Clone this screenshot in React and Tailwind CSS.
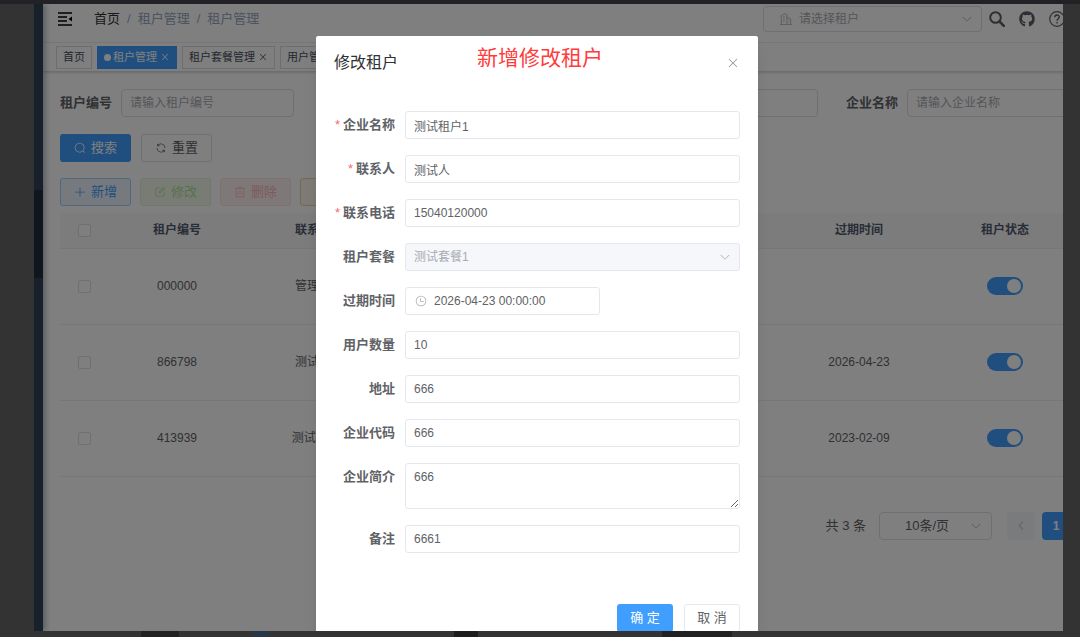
import React, { useState } from 'react';
import { FaGithub } from 'react-icons/fa';

// Icon outlines, drawn on a 1024 grid
const icons = {
    search: 'm795.904 750.72 124.992 124.928a32 32 0 0 1-45.248 45.248L750.656 795.904a416 416 0 1 1 45.248-45.248zM480 832a352 352 0 1 0 0-704 352 352 0 0 0 0 704',
    refresh: 'M771.776 794.88A384 384 0 0 1 128 512h64a320 320 0 0 0 555.712 216.448H654.72a32 32 0 1 1 0-64h149.056a32 32 0 0 1 32 32v148.928a32 32 0 1 1-64 0v-50.56zM276.288 295.616h92.992a32 32 0 0 1 0 64H220.16a32 32 0 0 1-32-32V178.56a32 32 0 0 1 64 0v50.56A384 384 0 0 1 896.128 512h-64a320 320 0 0 0-555.776-216.384z',
    plus: 'M480 480V128a32 32 0 0 1 64 0v352h352a32 32 0 1 1 0 64H544v352a32 32 0 1 1-64 0V544H128a32 32 0 0 1 0-64z',
    edit: 'M832 512a32 32 0 1 1 64 0v352a32 32 0 0 1-32 32H160a32 32 0 0 1-32-32V160a32 32 0 0 1 32-32h352a32 32 0 0 1 0 64H192v640h640zM469.952 554.24l52.8-7.552L847.104 222.4a32 32 0 1 0-45.248-45.248L477.44 501.44l-7.552 52.8zm422.4-422.4a96 96 0 0 1 0 135.808l-331.84 331.84a32 32 0 0 1-18.112 9.088L436.8 623.68a32 32 0 0 1-36.224-36.224l15.104-105.6a32 32 0 0 1 9.024-18.112l331.904-331.84a96 96 0 0 1 135.744 0z',
    trash: 'M160 256H96a32 32 0 0 1 0-64h256V95.936a32 32 0 0 1 32-32h256a32 32 0 0 1 32 32V192h256a32 32 0 1 1 0 64h-64v672a32 32 0 0 1-32 32H192a32 32 0 0 1-32-32zm448-64v-64H416v64zM224 896h576V256H224zm192-128a32 32 0 0 1-32-32V416a32 32 0 0 1 64 0v320a32 32 0 0 1-32 32m192 0a32 32 0 0 1-32-32V416a32 32 0 0 1 64 0v320a32 32 0 0 1-32 32',
    download: 'M160 832h704a32 32 0 1 1 0 64H160a32 32 0 1 1 0-64m384-253.696 236.288-236.352 45.248 45.248L508.8 704 192 387.2l45.248-45.248L480 584.704V128h64z',
    close: 'M764.288 214.592 512 466.88 259.712 214.592a31.936 31.936 0 0 0-45.12 45.12L466.752 512 214.528 764.224a31.936 31.936 0 1 0 45.12 45.184L512 557.184l252.288 252.288a31.936 31.936 0 0 0 45.12-45.12L557.12 512.064l252.288-252.352a31.936 31.936 0 1 0-45.12-45.184z',
    down: 'M831.872 340.864 512 652.672 192.128 340.864a30.592 30.592 0 0 0-42.752 0 29.12 29.12 0 0 0 0 41.6L489.664 714.24a32 32 0 0 0 44.672 0l340.288-331.712a29.12 29.12 0 0 0 0-41.728 30.592 30.592 0 0 0-42.752 0z',
    left: 'M609.408 149.376 277.76 489.6a32 32 0 0 0 0 44.672l331.648 340.352a29.12 29.12 0 0 0 41.728 0 30.592 30.592 0 0 0 0-42.752L339.264 511.936l311.872-319.872a30.592 30.592 0 0 0 0-42.688 29.12 29.12 0 0 0-41.728 0z',
    clock: 'M512 896a384 384 0 1 0 0-768 384 384 0 0 0 0 768m0 64a448 448 0 1 1 0-896 448 448 0 0 1 0 896M480 256a32 32 0 0 1 32 32v256a32 32 0 0 1-64 0V288a32 32 0 0 1 32-32M480 512h256q32 0 32 32t-32 32H480q-32 0-32-32t32-32',
};

const Icon = ({ name, className = 'h-3 w-3' }) => (
    <svg viewBox="0 0 1024 1024" fill="currentColor" className={`shrink-0 ${className}`} aria-hidden="true">
        <path d={icons[name]} />
    </svg>
);

const searchFields = [
    { id: 'q-tenant', label: '租户编号' },
    { id: 'q-contact', label: '联系人' },
    { id: 'q-phone', label: '联系电话' },
    { id: 'q-company', label: '企业名称' },
];

const tags = [
    { name: '首页' },
    { name: '租户管理', active: true, closable: true },
    { name: '租户套餐管理', closable: true },
    { name: '用户管理', closable: true },
];

const tools = [
    { name: '新增', icon: 'plus', color: 'border-[#9fceff] bg-[#ecf5ff] text-[#409eff]' },
    { name: '修改', icon: 'edit', color: 'border-[#e1f3d8] bg-[#f0f9eb] text-[#b3e19d]' },
    { name: '删除', icon: 'trash', color: 'border-[#fde2e2] bg-[#fef0f0] text-[#fab6b6]' },
    { name: '导出', icon: 'download', color: 'border-[#f3d19e] bg-[#fdf6ec] text-[#e6a23c]' },
];

const tenants = [
    { id: '000000', contact: '管理组', expire: '' },
    { id: '866798', contact: '测试人', expire: '2026-04-23' },
    { id: '413939', contact: '测试组1', expire: '2023-02-09' },
];

const formFields = [
    { id: 'companyName', label: '企业名称', value: '测试租户1', required: true },
    { id: 'contact', label: '联系人', value: '测试人', required: true },
    { id: 'phone', label: '联系电话', value: '15040120000', required: true },
    { id: 'package', label: '租户套餐', value: '测试套餐1', type: 'select' },
    { id: 'expire', label: '过期时间', value: '2026-04-23 00:00:00', type: 'date' },
    { id: 'userCount', label: '用户数量', value: '10' },
    { id: 'address', label: '地址', value: '666' },
    { id: 'code', label: '企业代码', value: '666' },
    { id: 'intro', label: '企业简介', value: '666', type: 'textarea' },
    { id: 'remark', label: '备注', value: '6661' },
];

const Navbar = () => (
    <header className="flex h-[39px] items-center border-b border-[#f0f0f0] pb-2 pl-[15px] pr-[18px]">
        <button type="button" aria-label="折叠菜单" className="text-black">
            <svg viewBox="0 0 14 14" className="h-[14px] w-[14px]" fill="none" stroke="currentColor" strokeWidth="1.5">
                <path d="M0 1h14M0 5h9M0 9h9M0 13h14" />
                <path d="M14 4.5v5L10.5 7z" fill="currentColor" stroke="none" />
            </svg>
        </button>
        <nav className="ml-[22px] flex items-center gap-[7px] text-[13px] text-[#97a8be]">
            <a href="#home" className="text-[#303133]">首页</a>
            <span>/</span>
            <span>租户管理</span>
            <span>/</span>
            <span>租户管理</span>
        </nav>
        <div className="ml-auto flex items-center gap-[14px] text-[#5a5e66]">
            <div className="-mr-[7px] flex h-[26px] w-[219px] items-center rounded border border-[#dcdfe6] pl-4 pr-2 text-[#a8abb2]">
                <svg viewBox="0 0 14 14" className="h-3 w-3 shrink-0" fill="none" stroke="currentColor" strokeWidth="0.9" aria-hidden="true">
                    <path d="M0 13.5h14M1.5 13V3L6 .8l2 1V13M8 5l4.500 2v6M3.500 4.500h2M3.500 7h2M3.500 9.500h2M10 8.500h1M10 10.500h1" />
                </svg>
                <select aria-label="选择租户" className="ml-[7px] min-w-0 flex-1 appearance-none text-[12px] outline-none">
                    <option>请选择租户</option>
                </select>
                <Icon name="down" />
            </div>
            <button type="button" aria-label="搜索菜单">
                <svg viewBox="0 0 16 16" className="h-4 w-4" fill="none" stroke="currentColor">
                    <circle cx="6.500" cy="6.500" r="5.300" strokeWidth="2" />
                    <path d="M10.500 10.500 14.800 14.800" strokeWidth="2.600" strokeLinecap="round" />
                </svg>
            </button>
            <a href="#github" aria-label="GitHub"><FaGithub className="h-4 w-4" /></a>
            <a href="#docs" aria-label="帮助">
                <svg viewBox="0 0 16 16" className="h-4 w-4" fill="none" stroke="currentColor" strokeWidth="1.200">
                    <circle cx="8" cy="8" r="7.300" />
                    <path d="M5.800 6.300C5.800 3.300 10.300 3.400 10.300 6.100 10.300 7.700 8 7.900 8 9.800M8 11v1.400" strokeWidth="1.400" />
                </svg>
            </a>
        </div>
    </header>
);

const TagsView = () => (
    <div className="flex h-[29px] items-center gap-[5px] border-b border-[#d8dce5] pl-[13px] shadow-sm">
        {tags.map((tag) => (
            <a
                key={tag.name}
                href="#tag"
                className={`flex h-[23px] items-center border px-[6px] text-[11px] ${tag.active ? 'border-[#409eff] bg-[#409eff] text-white' : 'border-[#d8dce5] text-[#495060]'}`}
            >
                {tag.active && <span className="mr-[2px] h-[7px] w-[7px] rounded-full bg-white" />}
                {tag.name}
                {tag.closable && <Icon name="close" className="ml-[3px] h-[10px] w-[10px]" />}
            </a>
        ))}
    </div>
);

const Switch = ({ label }) => {
    const [on, setOn] = useState(true);
    return (
        <input
            type="checkbox"
            role="switch"
            aria-label={label}
            checked={on}
            onChange={() => setOn(!on)}
            className="block h-[18px] w-9 appearance-none rounded-full bg-[#dcdfe6] p-[2px] before:block before:h-[14px] before:w-[14px] before:rounded-full before:bg-white checked:bg-[#409eff] checked:before:ml-auto"
        />
    );
};

const CheckBox = ({ label }) => (
    <input type="checkbox" aria-label={label} className="block h-[13px] w-[13px] appearance-none rounded-xs border border-[#dcdfe6] bg-white checked:bg-[#409eff]" />
);

const TenantTable = () => (
    <table className="w-full table-fixed text-center text-[12px] text-[#606266]">
        <colgroup>
            <col className="w-[49px]" />
            <col className="w-[136px]" />
            <col className="w-[136px]" />
            <col />
            <col className="w-[136px]" />
            <col className="w-[156px]" />
        </colgroup>
        <thead>
            <tr className="h-[35px] border-b border-[#ebeef5] bg-[#f8f8f9] text-[#515a6e]">
                <th><div className="flex justify-center"><CheckBox label="全选" /></div></th>
                <th>租户编号</th>
                <th>联系人</th>
                <th aria-hidden="true" />
                <th>过期时间</th>
                <th>租户状态</th>
            </tr>
        </thead>
        <tbody>
            {tenants.map((row) => (
                <tr key={row.id} className="h-[76px] border-b border-[#ebeef5]">
                    <td><div className="flex justify-center"><CheckBox label={row.id} /></div></td>
                    <td>{row.id}</td>
                    <td>{row.contact}</td>
                    <td />
                    <td>{row.expire}</td>
                    <td><div className="flex justify-center"><Switch label={`状态 ${row.id}`} /></div></td>
                </tr>
            ))}
        </tbody>
    </table>
);

const Pagination = () => (
    <div className="mt-[35px] flex h-7 items-center justify-end pr-[13px] text-[12px] text-[#606266]">
        <span className="text-[13px]">共 3 条</span>
        <div className="ml-[13px] flex h-7 w-[113px] items-center rounded border border-[#dcdfe6] pr-[9px]">
            <select aria-label="每页条数" className="min-w-0 flex-1 appearance-none pl-[25px] text-[13px] outline-none">
                <option>10条/页</option>
            </select>
            <Icon name="down" className="h-3 w-3 text-[#a8abb2]" />
        </div>
        <button type="button" aria-label="上一页" className="ml-[15px] flex h-7 w-7 items-center justify-center rounded-sm bg-[#f5f7fa] text-[#a8abb2]">
            <Icon name="left" className="h-[11px] w-[11px]" />
        </button>
        <button type="button" className="ml-[7px] h-7 w-7 rounded-sm bg-[#409eff] font-bold text-white">1</button>
    </div>
);

const inputClass = 'block h-7 w-full rounded-[3px] border border-[#e4e7ed] px-2 text-[12px] text-[#606266] outline-none';

const FormControl = ({ field }) => {
    if (field.type === 'select') {
        return (
            <div className="flex h-7 items-center rounded-[3px] border border-[#e4e7ed] bg-[#f5f7fa] px-2 text-[#a8abb2]">
                <select id={field.id} disabled className="min-w-0 flex-1 appearance-none text-[12px]">
                    <option>{field.value}</option>
                </select>
                <Icon name="down" />
            </div>
        );
    }
    if (field.type === 'date') {
        return (
            <div className="flex h-7 w-[195px] items-center gap-[7px] rounded-[3px] border border-[#e4e7ed] px-[9px] text-[#a8abb2]">
                <Icon name="clock" />
                <input id={field.id} defaultValue={field.value} className="min-w-0 flex-1 text-[12px] text-[#606266] outline-none" />
            </div>
        );
    }
    if (field.type === 'textarea') {
        return (
            <textarea
                id={field.id}
                defaultValue={field.value}
                className="block h-[46px] w-full resize-y rounded-[3px] border border-[#e4e7ed] px-2 py-1 text-[12px] text-[#606266] outline-none"
            />
        );
    }
    return <input id={field.id} defaultValue={field.value} className={inputClass} />;
};

const TenantDialog = () => (
    <section role="dialog" aria-label="修改租户" className="mt-8 w-[442px] rounded-xs bg-white px-[18px] pb-[18px] shadow-lg">
        <div className="flex h-[75px] items-start pt-[15px]">
            <h2 className="text-[16px] leading-6 text-[#303133]">修改租户</h2>
            <p className="-mt-2 ml-[79px] text-[21px] leading-[30px] text-[#ff3b3b]">新增修改租户</p>
            <button type="button" aria-label="关闭" className="ml-auto mt-[5px] text-[#909399]">
                <Icon name="close" className="h-[14px] w-[14px]" />
            </button>
        </div>
        <form className="flex flex-col gap-4">
            {formFields.map((field) => (
                <div key={field.id} className="flex">
                    <label htmlFor={field.id} className="w-[71px] shrink-0 whitespace-nowrap pr-[10px] text-right text-[13px] font-bold leading-7 text-[#606266]">
                        {field.required && <span className="mr-[3px] font-normal text-[#f56c6c]">*</span>}
                        {field.label}
                    </label>
                    <div className="min-w-0 flex-1">
                        <FormControl field={field} />
                    </div>
                </div>
            ))}
        </form>
        <div className="mt-[51px] flex justify-end gap-[11px] text-[13px]">
            <button type="button" className="h-7 w-14 rounded-[3px] bg-[#409eff] text-white">确 定</button>
            <button type="button" className="h-7 w-14 rounded-[3px] border border-[#e4e7ed] text-[#606266]">取 消</button>
        </div>
    </section>
);

export default function App() {
    return (
        <div className="flex h-screen flex-col overflow-hidden bg-[#333] font-['Liberation_Sans','Noto_Sans_CJK_SC',sans-serif]">
            <div className="h-1 shrink-0 bg-[#222226]" />
            <div className="relative ml-[34px] mr-[17px] flex min-h-0 flex-1 overflow-hidden bg-white">
                <aside className="z-0 w-[9px] shrink-0 bg-[#304156] pt-[186px] shadow-[2px_0_6px_rgba(0,21,41,0.35)]">
                    <div className="h-[88px] bg-[#1f2d3d]" />
                </aside>

                <main className="min-w-[1040px] flex-1">
                    <Navbar />
                    <TagsView />
                    <div className="pl-[17px] pt-[17px]">
                        <form className="flex gap-7">
                            {searchFields.map((field) => (
                                <div key={field.id} className="flex shrink-0 items-center">
                                    <label htmlFor={field.id} className="w-[61px] whitespace-nowrap text-[13px] font-bold text-[#606266]">{field.label}</label>
                                    <input
                                        id={field.id}
                                        placeholder={`请输入${field.label}`}
                                        className="h-7 w-[173px] rounded border border-[#dcdfe6] px-2 text-[12px] outline-none placeholder:text-[#a8abb2]"
                                    />
                                </div>
                            ))}
                        </form>
                        <div className="mt-[17px] flex gap-[10px] text-[13px]">
                            <button type="button" className="flex h-7 w-[71px] items-center justify-center gap-[5px] rounded-[3px] bg-[#409eff] text-white">
                                <Icon name="search" />
                                搜索
                            </button>
                            <button type="button" className="flex h-7 w-[71px] items-center justify-center gap-[5px] rounded-[3px] border border-[#dcdfe6] text-[#606266]">
                                <Icon name="refresh" />
                                重置
                            </button>
                        </div>
                        <div className="mt-4 flex gap-[9px] text-[13px]">
                            {tools.map((tool) => (
                                <button key={tool.name} type="button" className={`flex h-7 w-[71px] items-center justify-center gap-[5px] rounded-[3px] border ${tool.color}`}>
                                    <Icon name={tool.icon} />
                                    {tool.name}
                                </button>
                            ))}
                        </div>
                        <div className="mt-[7px]">
                            <TenantTable />
                        </div>
                        <Pagination />
                    </div>
                </main>

                {/* Modal mask */}
                <div className="absolute inset-0 z-10 flex items-start justify-center overflow-hidden bg-black/50 pr-[23px]">
                    <TenantDialog />
                </div>
            </div>
            <div className="flex h-[6px] shrink-0 pl-[141px]">
                <div className="w-[38px] bg-[#222]" />
                <div className="ml-[74px] w-4 bg-[#283748]" />
                <div className="ml-[185px] w-6 bg-[#1c1c1c]" />
                <div className="ml-[184px] w-[70px] bg-[#222]" />
            </div>
        </div>
    );
}
